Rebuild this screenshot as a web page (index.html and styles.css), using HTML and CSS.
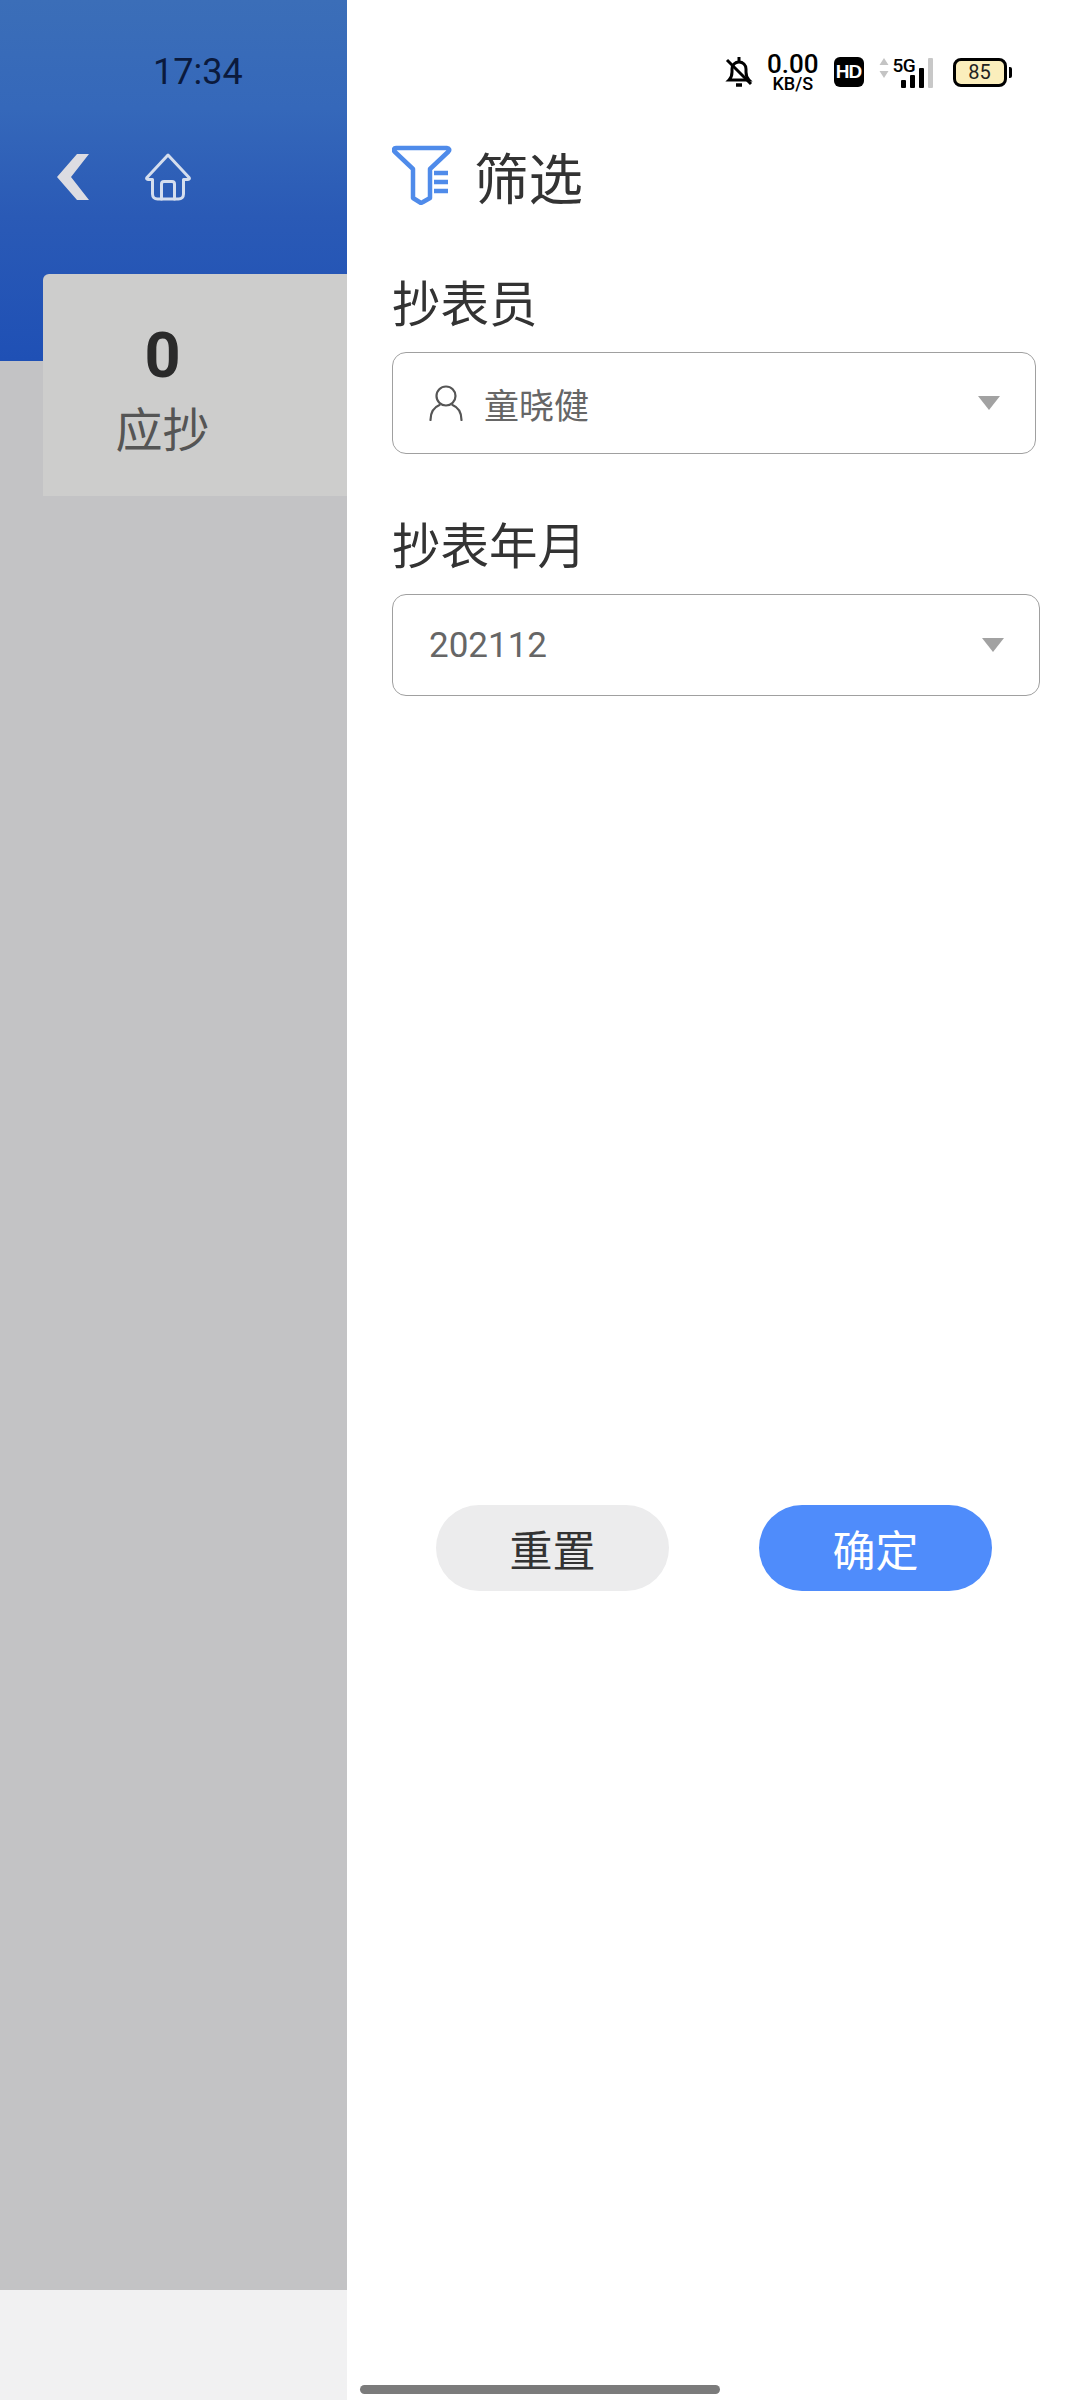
FILE: index.html
```html
<!DOCTYPE html>
<html lang="zh">
<head>
    <meta charset="UTF-8">
    <meta name="viewport" content="width=device-width, initial-scale=1.0">
    <title>筛选</title>
    <link rel="stylesheet" href="styles.css">
</head>
<body>
    <div class="app">
        <!-- 左侧被遮罩的页面 -->
        <div class="side">
            <div class="side-head">
                <div class="time">17:34</div>
                <div class="nav">
                    <svg class="nav-back" width="36" height="48" viewBox="0 0 36 48"><path d="M33 1H21L1 24l20 23h12L15 24z" fill="#dcdce2"/></svg>
                    <svg class="nav-home" width="46" height="48" viewBox="0 0 46 48" fill="none" stroke="#d5deee" stroke-width="3" stroke-linejoin="round" stroke-linecap="round"><path d="M23 2 2 24.500c-.8 1-.3 2 1 2h4.500V41c0 3 2 5 5 5h21c3 0 5-2 5-5V26.500H43c1.300 0 1.800-1 1-2z"/><path d="M16.500 46V31c0-1.500.8-2.500 2.500-2.500h8c1.700 0 2.500 1 2.500 2.500v15"/></svg>
                </div>
                <div class="card">
                    <div class="card-num">0</div>
                    <div class="card-label">应抄</div>
                </div>
            </div>
            <div class="side-mask"></div>
            <div class="side-foot"></div>
        </div>

        <!-- 右侧筛选面板 -->
        <div class="panel">
            <div class="status">
                <svg class="st-bell" width="28" height="32" viewBox="0 0 28 32" fill="none" stroke="#000" stroke-width="3"><path d="M4 24c2-2 3-4 3-8v-3c0-4 3-7 7-7s7 3 7 7v3c0 4 1 6 3 8z"/><path d="M14 1v4M2 4l24 24"/><path d="M11 29h6" stroke-width="3.500"/></svg>
                <div class="st-speed"><span class="st-speed-num">0.00</span><span class="st-speed-unit">KB/S</span></div>
                <div class="st-hd">HD</div>
                <div class="st-signal">
                    <svg class="st-arrows" width="10" height="22" viewBox="0 0 10 22" fill="#c4c4c4"><path d="M5 1l4.500 7h-9zM5 21l4.500-7h-9z"/></svg>
                    <span class="st-5g">5G</span>
                    <div class="st-bars">
                        <i class="bar bar1"></i>
                        <i class="bar bar2"></i>
                        <i class="bar bar3"></i>
                        <i class="bar bar4"></i>
                    </div>
                </div>
                <div class="st-batt">
                    <div class="st-batt-body">85</div>
                    <div class="st-batt-tip"></div>
                </div>
            </div>

            <div class="title">
                <svg width="60" height="60" viewBox="0 0 60 60" fill="none" stroke="#4f8bea"><path d="M4 3h51c2 0 3 2 1.500 3.500L38 24v29l-7 4-2 1-8-5V24L2.500 6.500C1 5 2 3 4 3z" stroke-width="4.500" stroke-linejoin="round"/><path d="M42 28h14M42 37h14M42 46h14" stroke-width="4.500"/></svg>
                <span>筛选</span>
            </div>

            <div class="label">抄表员</div>
            <div class="select select-user">
                <svg class="user-icon" width="34" height="36" viewBox="0 0 34 36" fill="none" stroke="#555" stroke-width="2.200" stroke-linecap="round"><circle cx="17" cy="11" r="9.500"/><path d="M1.500 35c0-8 4-13 9-15M32.500 35c0-8-4-13-9-15"/></svg>
                <span class="select-text">童晓健</span>
                <i class="arrow"></i>
            </div>

            <div class="label label-2">抄表年月</div>
            <div class="select select-month">
                <span class="select-text month">202112</span>
                <i class="arrow"></i>
            </div>

            <div class="btns">
                <div class="btn btn-reset">重置</div>
                <div class="btn btn-ok">确定</div>
            </div>

            <div class="home-bar"></div>
        </div>
    </div>
</body>
</html>
```

FILE: styles.css
```css
*{
    margin: 0;
    padding: 0;
    box-sizing: border-box;
}
body{
    width: 1080px;
    height: 2400px;
    overflow: hidden;
    background-color: #ffffff;
    font-family: "Noto Sans CJK SC", "Noto Sans", sans-serif;
}
.app{
    display: flex;
    height: 2400px;
}

/* 左侧 */
.side{
    width: 347px;
    height: 100%;
    display: flex;
    flex-direction: column;
    background-color: #c3c3c5;
}
.side-head{
    height: 361px;
    padding-top: 50px;
    background: linear-gradient(180deg, #3b6eb8 0%, #3568ba 30%, #2a5ab6 60%, #1f50b5 100%);
}
.time{
    height: 44px;
    padding-left: 153px;
    font-family: Roboto, sans-serif;
    font-size: 36px;
    line-height: 44px;
    color: #0b1a3d;
}
.nav{
    display: flex;
    align-items: center;
    margin-top: 59px;
    padding-left: 56px;
    height: 48px;
}
.nav-home{
    margin-left: 53px;
}
.card{
    width: 304px;
    height: 222px;
    margin: 73px 0 0 43px;
    padding: 50px 65px 0 0;
    border-radius: 6px 0 0 0;
    background-color: #cdcdcc;
    text-align: center;
}
.card-num{
    font-family: Roboto, sans-serif;
    font-weight: 700;
    font-size: 63px;
    line-height: 64px;
    color: #2a2a2a;
}
.card-label{
    font-size: 47px;
    line-height: 68px;
    color: #555555;
    margin-top: 5px;
}
.side-mask{
    flex: 1;
}
.side-foot{
    height: 110px;
    background-color: #f1f1f2;
}

/* 筛选面板 */
.panel{
    flex: 1;
    display: flex;
    flex-direction: column;
    padding-left: 45px;
    background-color: #ffffff;
}
.status{
    display: flex;
    align-items: center;
    height: 40px;
    margin-top: 52px;
    padding-left: 333px;
    color: #000000;
}
.st-speed{
    display: flex;
    flex-direction: column;
    align-items: center;
    margin-left: 14px;
    font-family: Roboto, sans-serif;
    font-weight: 500;
    line-height: 1;
}
.st-speed-num{
    font-size: 26px;
    height: 22px;
    line-height: 22px;
}
.st-speed-unit{
    font-size: 18px;
    height: 17px;
    line-height: 17px;
}
.st-hd{
    width: 30px;
    height: 30px;
    margin-left: 15px;
    border-radius: 6px;
    background-color: #000000;
    color: #ffffff;
    font-family: "Liberation Sans", sans-serif;
    font-weight: 700;
    font-size: 19px;
    line-height: 30px;
    text-align: center;
    letter-spacing: -1px;
}
.st-signal{
    display: flex;
    position: relative;
    width: 54px;
    height: 32px;
    margin-left: 15px;
}
.st-arrows{
    margin-top: 1px;
}
.st-5g{
    margin-left: 4px;
    font-family: Roboto, sans-serif;
    font-weight: 500;
    font-size: 19px;
    line-height: 20px;
    letter-spacing: -.5px;
}
/* 信号格压在5G文字右下方 */
.st-bars{
    display: flex;
    position: absolute;
    right: 0;
    bottom: 0;
    align-items: flex-end;
    gap: 4px;
}
.bar{
    display: block;
    width: 5px;
    background-color: #000000;
    border-radius: 1px;
}
.bar1{ height: 8px; }
.bar2{ height: 13px; }
.bar3{ height: 20px; }
.bar4{ height: 30px; background-color: #c8c8c8; }
.st-batt{
    display: flex;
    align-items: center;
    margin-left: 20px;
}
.st-batt-body{
    width: 54px;
    height: 29px;
    border: 3px solid #000000;
    border-radius: 8px;
    background-color: #fbeebc;
    font-family: Roboto, sans-serif;
    font-size: 20px;
    line-height: 23px;
    text-align: center;
    color: #222222;
}
.st-batt-tip{
    width: 3px;
    height: 11px;
    margin-left: 2px;
    border-radius: 0 2px 2px 0;
    background-color: #000000;
}
.title{
    display: flex;
    align-items: center;
    height: 60px;
    margin-top: 53px;
    font-size: 54.500px;
    color: #333333;
}
.title svg{
    margin-right: 22px;
}
.label{
    margin-top: 66px;
    height: 60px;
    font-size: 48.500px;
    line-height: 60px;
    color: #333333;
}
.label-2{
    margin-top: 59px;
}
.select{
    display: flex;
    align-items: center;
    height: 102px;
    margin-top: 21px;
    padding-left: 36px;
    border: 1px solid #a0a0a0;
    border-radius: 14px;
    background-color: #ffffff;
}
.select-user{
    width: 644px;
}
.select-month{
    width: 648px;
}
.user-icon{
    margin-right: 21px;
}
.select-text{
    flex: 1;
    font-size: 35px;
    color: #666666;
}
.month{
    font-family: Roboto, sans-serif;
}
.arrow{
    width: 0;
    height: 0;
    margin-right: 35px;
    border-left: 11px solid transparent;
    border-right: 11px solid transparent;
    border-top: 14px solid #a2a2a2;
}
.btns{
    display: flex;
    gap: 90px;
    margin-top: 809px;
    padding-left: 44px;
}
.btn{
    width: 233px;
    height: 86px;
    border-radius: 43px;
    font-size: 43px;
    line-height: 86px;
    text-align: center;
}
.btn-reset{
    background-color: #ececed;
    color: #333333;
}
.btn-ok{
    background-color: #4f8cfb;
    color: #ffffff;
}
.home-bar{
    width: 360px;
    height: 9px;
    margin: auto 0 6px -32px;
    border-radius: 5px;
    background-color: #7b7b7b;
}
```
